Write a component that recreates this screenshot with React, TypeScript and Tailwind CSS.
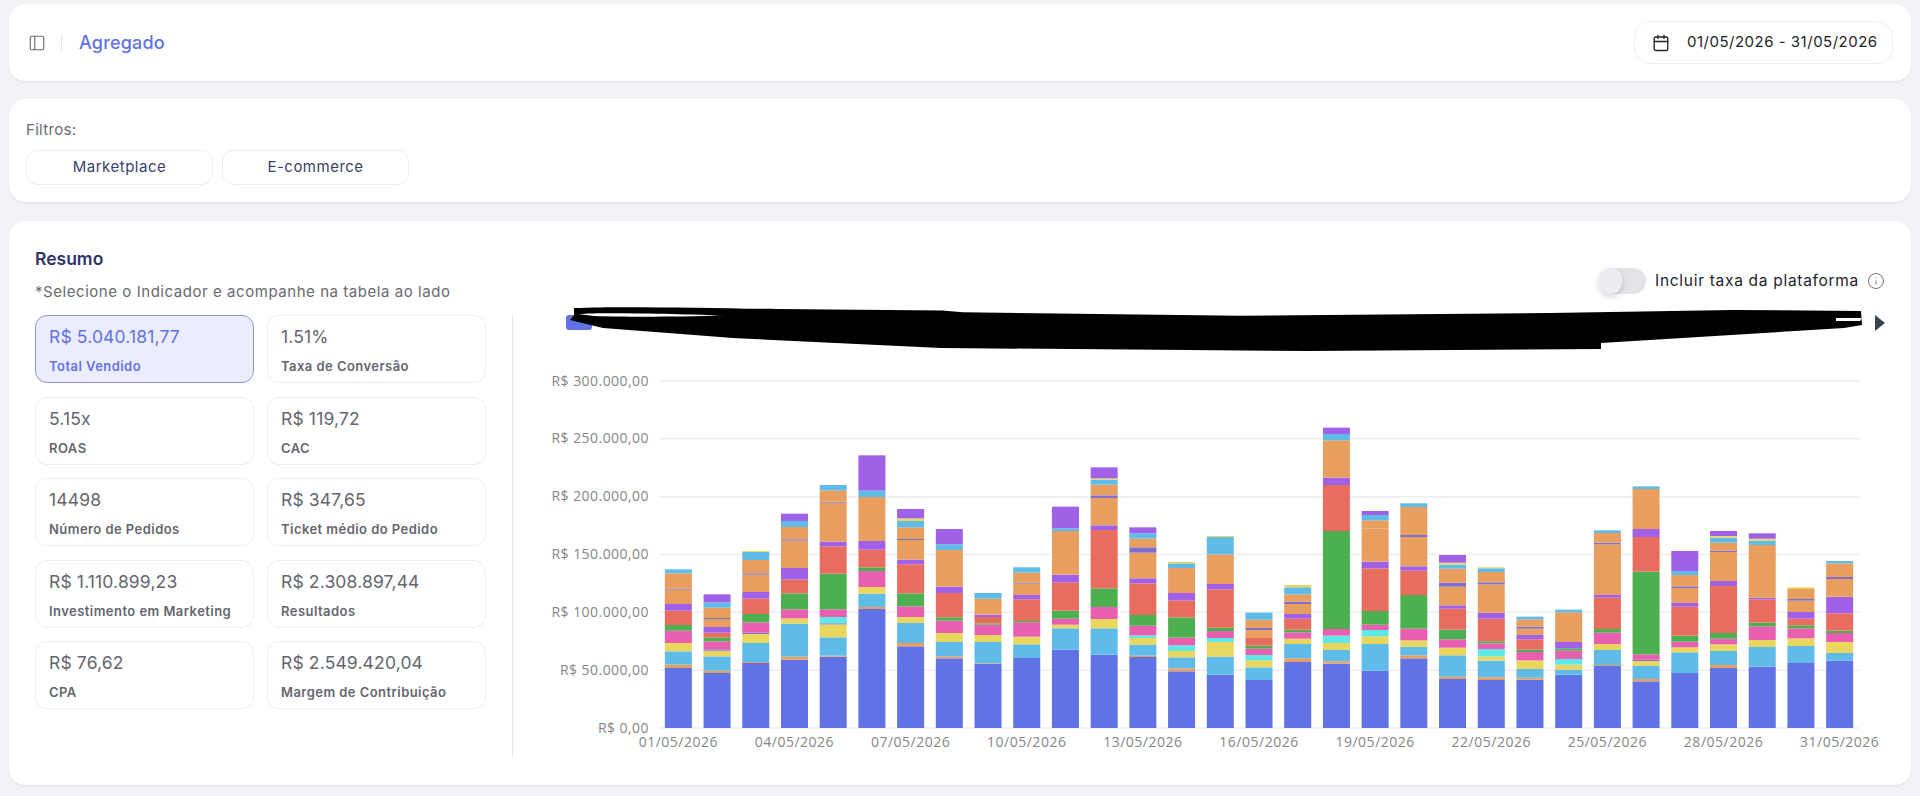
import { Calendar, Info, PanelLeft } from "lucide-react";

const COLORS: Record<string, string> = {
  B: "#6172e5",
  O: "#e89e5f",
  C: "#5fbbe8",
  Y: "#e9d65f",
  Q: "#5fe8e8",
  P: "#e85fb0",
  G: "#4caf50",
  R: "#e96d5f",
  V: "#a060e8",
  I: "#7c6fd0",
};

// Top of each segment, bottom to top, in a 3x scale of the plot (baseline = 927).
const BARS: string[] = [
  "B747 O737 C697 Y672 P635 G618 R575 V555 O512 I509 O463 C451",
  "B762 O755 C712 Y695 I691 P667 G655 R641 V624 O600 I597 O566 C550 V526",
  "B732 O729 C672 Y645 I641 P610 G585 R539 V519 O467 I463 O423 C399 Y396",
  "B722 O713 C614 Y598 P571 G523 R481 V447 O365 I361 O324 C306 V284",
  "B713 O710 C655 Y616 I613 Q594 P571 G464 R382 V368 O251 I248 O214 C198",
  "B570 O564 C524 Y504 P456 G445 R392 V366 O234 C215 V109",
  "B682 O672 C612 Y594 P562 G523 R436 V422 O363 I360 O325 C306 Y298 V270",
  "B718 O712 C669 Y642 P605 G595 R522 V503 O393 C376 V330",
  "B735 O733 C669 Y648 P617 G613 R594 V587 O539 C522",
  "B717 C676 Y653 P610 G606 R541 V528 O494 I491 O461 C445",
  "B692 C628 Y617 P599 G575 R490 V467 O336 C328 V263",
  "B707 C628 Y600 P564 G508 R333 V319 O237 I229 O197 C182 Y178 V145",
  "B714 O710 C677 Y657 Q649 P620 G588 R493 V478 O401 I385 O359 C343 V325",
  "B757 O748 C715 Y696 Q679 P656 G595 R544 V522 O447 C433 Y429",
  "B767 C713 Y669 Q657 P636 G626 R511 V495 O406 C354 Y351",
  "B783 C745 Y724 Q708 P689 G680 R657 O633 I627 O602 C581",
  "B729 O718 C675 Y659 P640 G632 R599 V585 O555 I548 O526 C505 Y498",
  "B734 O727 C693 Y672 Q650 P630 G336 R198 V176 O64 C45 V26",
  "B755 C675 Y652 Q633 P617 G576 R448 V428 O328 O304 C288 V276",
  "B718 O709 C684 Y664 P629 G528 R455 V442 O354 I348 O264 C253",
  "B780 O773 C709 Y686 P661 G632 R569 V559 O503 I491 O449 C437 Y431 V408",
  "B783 O775 C725 Y712 Q690 P673 G667 R599 V581 O496 I490 O459 C448 Y445",
  "B782 O776 C750 Y724 P699 G692 R661 V648 O629 I623 O601 C593",
  "B767 C752 Y737 Q720 P695 G688 V669 O580 C572",
  "B741 O738 C693 Y675 P641 G630 R536 V528 O376 I371 O342 C334",
  "B787 O780 C741 Y726 I722 P706 G458 R354 V330 O210 C202",
  "B762 C700 Y685 P668 G650 R563 V552 O507 I502 O468 C456 V396",
  "B747 O738 C696 Y676 P659 G642 R501 V486 O399 I395 O371 C356 Y351 V336",
  "B743 C684 Y663 P622 G611 R541 V536 O378 C365 Y359 V343",
  "B732 C681 Y658 P628 G619 R599 V579 O545 I540 O510 Y505",
  "B725 C702 Y669 P642 G635 R583 V533 O480 I474 O433 C426",
];

const KPIS = [
  ["R$ 5.040.181,77", "Total Vendido"],
  ["1.51%", "Taxa de Conversão"],
  ["5.15x", "ROAS"],
  ["R$ 119,72", "CAC"],
  ["14498", "Número de Pedidos"],
  ["R$ 347,65", "Ticket médio do Pedido"],
  ["R$ 1.110.899,23", "Investimento em Marketing"],
  ["R$ 2.308.897,44", "Resultados"],
  ["R$ 76,62", "CPA"],
  ["R$ 2.549.420,04", "Margem de Contribuição"],
];

const Y_LABELS = ["R$ 300.000,00", "R$ 250.000,00", "R$ 200.000,00", "R$ 150.000,00", "R$ 100.000,00", "R$ 50.000,00", "R$ 0,00"];
const X_LABELS = [0, 3, 6, 9, 12, 15, 18, 21, 24, 27, 30];

function Chart() {
  const left = 146;
  const pitch = 1200 / 31;
  const base = 347 + 12;
  return (
    <svg width="1399" height="395" className="block" style={{ fontFamily: '"Open Sans", sans-serif' }}>
      {Y_LABELS.map((label, i) => {
        const y = 12 + (i * 347) / 6;
        return (
          <g key={label}>
            <line x1={left} x2={left + 1200} y1={y} y2={y} stroke="#eeeef0" strokeWidth="1.5" />
            <text x={left - 10} y={y + 4.5} textAnchor="end" fontSize="14" letterSpacing="0.45" fill="#868686">
              {label}
            </text>
          </g>
        );
      })}
      {BARS.map((bar, i) => {
        let prev = 927;
        const x = left + pitch * i + (pitch - 27) / 2;
        return (
          <g key={i}>
            {bar.split(" ").map((seg, j) => {
              const top = Number(seg.slice(1));
              const h = (prev - top) / 3;
              const y = base - (927 - top) / 3;
              prev = top;
              return <rect key={j} x={x} y={y} width="27" height={Math.max(h, 0)} fill={COLORS[seg[0]]} />;
            })}
          </g>
        );
      })}
      {X_LABELS.map((i) => (
        <text key={i} x={left + pitch * (i + 0.5)} y={378} textAnchor="middle" fontSize="14" letterSpacing="0.5" fill="#868686">
          {String(i + 1).padStart(2, "0")}/05/2026
        </text>
      ))}
    </svg>
  );
}

function Kpi({ value, label, active }: { value: string; label: string; active: boolean }) {
  return (
    <div
      className={
        active
          ? "h-[68px] rounded-xl border border-[#8a96e0] bg-[#ebedfc] px-[13px] pt-[9px] text-[#6172e5]"
          : "h-[68px] rounded-xl border border-[#eeeef2] bg-white px-[13px] pt-[9px] text-[#65666e]"
      }
    >
      <div className="text-[17.5px] leading-[24px] tracking-[0.15px]">{value}</div>
      <div className="mt-[8px] text-[13px] font-semibold leading-[18px] tracking-[0.45px]">{label}</div>
    </div>
  );
}

export default function App() {
  return (
    <div
      className="flex h-[796px] flex-col overflow-hidden bg-[#f2f2f7] px-[9px] pt-[4px]"
      style={{ fontFamily: 'Inter, "Open Sans", sans-serif' }}
    >
      <header className="flex h-[77px] shrink-0 items-center justify-between rounded-2xl bg-white pl-[19px] pr-[18px] shadow-[0_1px_2px_rgba(0,0,0,0.08)]">
        <div className="flex items-center">
          <PanelLeft size={18} strokeWidth={1.5} className="text-[#6b6b70]" />
          <div className="ml-[15px] h-[17px] w-px bg-[#e6e6ea]" />
          <span className="ml-[17px] text-[18px] font-medium tracking-[0.2px] text-[#6172e5]">Agregado</span>
        </div>
        <div className="flex h-[43px] w-[259px] items-center rounded-2xl border border-[#eeeef2] pl-[17px] text-[15px] tracking-[0.5px] text-[#23242a]">
          <Calendar size={18} strokeWidth={1.8} />
          <span className="ml-[17px]">01/05/2026 - 31/05/2026</span>
        </div>
      </header>

      <section className="mt-[18px] h-[103px] shrink-0 rounded-2xl bg-white pl-[17px] pt-[21px] shadow-[0_1px_2px_rgba(0,0,0,0.08)]">
        <div className="text-[15px] leading-[20px] tracking-[0.3px] text-[#6a6a70]">Filtros:</div>
        <div className="mt-[10px] flex gap-[9px]">
          {["Marketplace", "E-commerce"].map((f) => (
            <div
              key={f}
              className="flex h-[35px] w-[187px] items-center justify-center rounded-xl border border-[#eeeef2] text-[15px] tracking-[0.5px] text-[#3a3f6b]"
            >
              {f}
            </div>
          ))}
        </div>
      </section>

      <section className="relative mt-[19px] flex h-[564px] shrink-0 rounded-2xl bg-white pl-[26px] shadow-[0_1px_2px_rgba(0,0,0,0.08)]">
        <div className="w-[451px] shrink-0 pt-[26px]">
          <h2 className="text-[17.5px] font-semibold leading-[24px] text-[#2e3466]">Resumo</h2>
          <p className="mt-[9px] whitespace-nowrap text-[15px] leading-[24px] tracking-[0.55px] text-[#6a6a70]">
            *Selecione o Indicador e acompanhe na tabela ao lado
          </p>
          <div className="mt-[11px] grid w-[451px] grid-cols-2 gap-x-[13px] gap-y-[13.5px]">
            {KPIS.map(([value, label], i) => (
              <Kpi key={label} value={value} label={label} active={i === 0} />
            ))}
          </div>
        </div>
        <div className="ml-[26px] mt-[93px] h-[444px] w-px bg-[#e8e8ec]" />
        <div className="flex min-w-0 flex-1 flex-col">
          <div className="mt-[47px] flex h-[26px] items-center justify-end pr-[26px]">
            <div className="h-[26px] w-[47px] rounded-full bg-[#e4e4e8]">
              <div className="h-[26px] w-[23px] rounded-full bg-[#ececf2] shadow-[0_3px_6px_rgba(0,0,0,0.15)]" />
            </div>
            <span className="ml-[9px] text-[15.5px] tracking-[0.7px] text-[#23242a]">Incluir taxa da plataforma</span>
            <Info size={18} strokeWidth={1.3} className="ml-[8px] text-[#6f6f74]" />
          </div>
          <div className="mt-[11px] flex h-[35px] items-center pl-[53px] pr-[26px]">
            <div className="h-[15px] w-[26px] rounded-[3px] bg-[#6172e5]" />
            <div className="ml-[719px] h-[15px] w-[26px] rounded-[3px] bg-[#e85fb0]" />
            <div className="ml-auto h-0 w-0 border-y-[8px] border-l-[10px] border-y-transparent border-l-[#37474f]" />
          </div>
          <div className="mt-[29px]">
            <Chart />
          </div>
        </div>
        <svg className="absolute left-[555px] top-[80px]" width="1310" height="60" viewBox="0 0 1310 60">
          <path
            d="M10 7 C 60 5 140 7 213 8 L 378 9.5 L 399 11.3 L 676 14.7 L 986 12 L 1168 9 L 1297 10 L 1298 24 L 1280 27 L 1037 42 L 1037 48 L 743 50 L 377 47 L 169 37 L 39 27 L 6 19 L 10 14 Z"
            fill="#000"
          />
          <path d="M14 13 C 40 11 120 13 160 14.5 C 110 16 60 16 30 15 Z" fill="#fff" />
          <path d="M1272 17 L1298 17 L1296 20 L1272 20 Z" fill="#fff" />
        </svg>
      </section>
    </div>
  );
}
